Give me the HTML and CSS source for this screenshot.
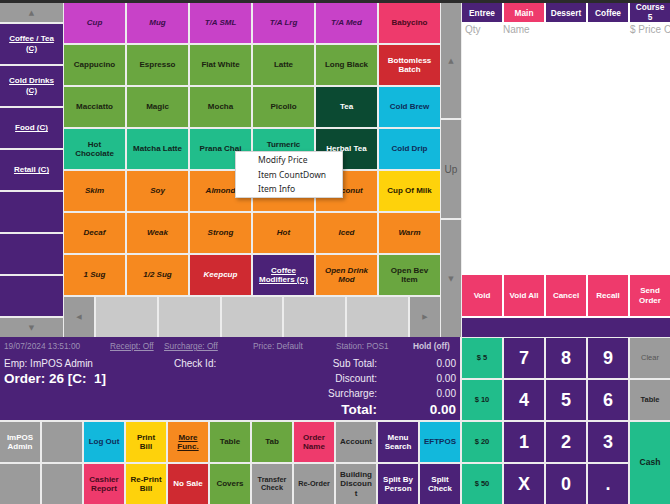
FILE: index.html
```html
<!DOCTYPE html>
<html lang="en">
<head>
<meta charset="UTF-8">
<title>POS</title>
<link rel="stylesheet" href="styles.css">
</head>
<body>
<div class="topbar"></div>
<div class="main">
	<div class="cats">
		<div class="arrow">&#9650;</div>
		<div class="cat u">Coffee / Tea (C)</div>
		<div class="cat u">Cold Drinks (C)</div>
		<div class="cat u">Food (C)</div>
		<div class="cat u">Retail (C)</div>
		<div class="cat"></div>
		<div class="cat"></div>
		<div class="cat"></div>
		<div class="arrow">&#9660;</div>
	</div>
	<div class="items">
		<div class="grid">
			<div class="btn mag it">Cup</div>
			<div class="btn mag it">Mug</div>
			<div class="btn mag it">T/A SML</div>
			<div class="btn mag it">T/A Lrg</div>
			<div class="btn mag it">T/A Med</div>
			<div class="btn pink">Babycino</div>

			<div class="btn green">Cappucino</div>
			<div class="btn green">Espresso</div>
			<div class="btn green">Flat White</div>
			<div class="btn green">Latte</div>
			<div class="btn green">Long Black</div>
			<div class="btn red">Bottomless Batch</div>

			<div class="btn green">Macciatto</div>
			<div class="btn green">Magic</div>
			<div class="btn green">Mocha</div>
			<div class="btn green">Picollo</div>
			<div class="btn dkgreen">Tea</div>
			<div class="btn cyan">Cold Brew</div>

			<div class="btn teal">Hot Chocolate</div>
			<div class="btn teal">Matcha Latte</div>
			<div class="btn teal">Prana Chai</div>
			<div class="btn teal">Turmeric Latte</div>
			<div class="btn dkgreen">Herbal Tea</div>
			<div class="btn cyan">Cold Drip</div>

			<div class="btn orange it">Skim</div>
			<div class="btn orange it">Soy</div>
			<div class="btn orange it">Almond</div>
			<div class="btn orange it">Oat</div>
			<div class="btn orange it">Coconut</div>
			<div class="btn yellow">Cup Of Milk</div>

			<div class="btn orange it">Decaf</div>
			<div class="btn orange it">Weak</div>
			<div class="btn orange it">Strong</div>
			<div class="btn orange it">Hot</div>
			<div class="btn orange it">Iced</div>
			<div class="btn orange it">Warm</div>

			<div class="btn orange it">1 Sug</div>
			<div class="btn orange it">1/2 Sug</div>
			<div class="btn red it">Keepcup</div>
			<div class="btn purple u">Coffee Modifiers (C)</div>
			<div class="btn orange it">Open Drink Mod</div>
			<div class="btn green">Open Bev Item</div>
		</div>
		<div class="pager">
			<div class="arrow side">&#9664;</div>
			<div class="blank"></div>
			<div class="blank"></div>
			<div class="blank"></div>
			<div class="blank"></div>
			<div class="blank"></div>
			<div class="arrow side">&#9654;</div>
		</div>
	</div>
	<div class="vscroll">
		<div class="arrow vs-up">&#9650;</div>
		<div class="vs-mid">Up</div>
		<div class="arrow vs-down">&#9660;</div>
	</div>
	<div class="order">
		<div class="tabs">
			<div class="tab">Entree</div>
			<div class="tab on">Main</div>
			<div class="tab">Dessert</div>
			<div class="tab">Coffee</div>
			<div class="tab two">Course 5</div>
		</div>
		<div class="list">
			<div class="head"><span>Qty</span><span>Name</span><span>$ Price C</span></div>
		</div>
		<div class="actions">
			<div class="btn pink w">Void</div>
			<div class="btn pink w">Void All</div>
			<div class="btn pink w">Cancel</div>
			<div class="btn pink w">Recall</div>
			<div class="btn pink w">Send Order</div>
		</div>
		<div class="band"></div>
	</div>
</div>
<div class="lower">
	<div class="left">
		<div class="info">
			<div class="status">
				<span>19/07/2024 13:51:00</span>
				<span class="u">Receipt: Off</span>
				<span class="u">Surcharge: Off</span>
				<span>Price: Default</span>
				<span>Station: POS1</span>
				<span class="hold">Hold (off)</span>
			</div>
			<div class="sums">
				<span class="emp">Emp: ImPOS Admin</span>
				<span class="emp">Check Id:</span>
				<span class="lbl">Sub Total:</span>
				<span class="val">0.00</span>

				<span class="ord">Order: 26 [C:&nbsp; 1]</span>
				<span></span>
				<span class="lbl">Discount:</span>
				<span class="val">0.00</span>

				<span></span>
				<span></span>
				<span class="lbl">Surcharge:</span>
				<span class="val">0.00</span>

				<span></span>
				<span></span>
				<span class="lbl total">Total:</span>
				<span class="val total">0.00</span>
			</div>
		</div>
		<div class="funcs">
			<div class="btn gray w">ImPOS Admin</div>
			<div class="btn gray"></div>
			<div class="btn cyan">Log Out</div>
			<div class="btn yellow pad">Print Bill</div>
			<div class="btn orange u">More Func.</div>
			<div class="btn green">Table</div>
			<div class="btn green">Tab</div>
			<div class="btn pink">Order Name</div>
			<div class="btn gray">Account</div>
			<div class="btn purple">Menu Search</div>
			<div class="btn cyan">EFTPOS</div>

			<div class="btn gray"></div>
			<div class="btn gray"></div>
			<div class="btn pink">Cashier Report</div>
			<div class="btn yellow">Re-Print Bill</div>
			<div class="btn red">No Sale</div>
			<div class="btn green">Covers</div>
			<div class="btn gray sm">Transfer Check</div>
			<div class="btn gray sm">Re-Order</div>
			<div class="btn gray brk">Building Discount</div>
			<div class="btn purple">Split By Person</div>
			<div class="btn purple">Split Check</div>
		</div>
	</div>
	<div class="numpad">
		<div class="btn teal cash">$ 5</div>
		<div class="btn key">7</div>
		<div class="btn key">8</div>
		<div class="btn key">9</div>
		<div class="btn gray clear">Clear</div>

		<div class="btn teal cash">$ 10</div>
		<div class="btn key">4</div>
		<div class="btn key">5</div>
		<div class="btn key">6</div>
		<div class="btn gray side-key">Table</div>

		<div class="btn teal cash">$ 20</div>
		<div class="btn key">1</div>
		<div class="btn key">2</div>
		<div class="btn key">3</div>
		<div class="btn teal pay">Cash</div>

		<div class="btn teal cash">$ 50</div>
		<div class="btn key">X</div>
		<div class="btn key">0</div>
		<div class="btn key">.</div>
	</div>
</div>

<div class="menu">
	<div>Modify Price</div>
	<div>Item CountDown</div>
	<div>Item Info</div>
</div>
</body>
</html>
```

FILE: styles.css
```css
html, body { margin:0; padding:0; }
body { width:670px; height:504px; overflow:hidden; position:relative; background:#ececec; font-family:"Liberation Sans", Arial, sans-serif; font-weight:bold; font-size:8px; }

.topbar { height:3px; background:#2b2b2b; }

.main { display:flex; gap:1px; height:334px; }

/* category column */
.cats { width:63px; display:flex; flex-direction:column; gap:2px; }
.cats .arrow { height:19px; }
.cat { flex:1; background:#4b2277; color:#fff; display:flex; align-items:center; justify-content:center; text-align:center; padding:0 4px; line-height:1.2; }

.arrow { background:#9b9b9b; color:#707070; display:flex; align-items:center; justify-content:center; font-family:"DejaVu Sans", sans-serif; font-size:7px; }

/* item grid */
.items { width:376px; display:flex; flex-direction:column; gap:2px; }
.grid { display:grid; grid-template-columns:repeat(6, 1fr); grid-template-rows:repeat(7, 40px); gap:2px; }
.grid .btn { padding:0 4px; }
.pager { height:40px; display:flex; gap:2px; }
.pager .side { width:30px; }
.pager .blank { flex:1; background:#c9c9c9; }

.vscroll { width:20px; display:flex; flex-direction:column; gap:2px; }
.vs-up { height:115px; }
.vs-mid { height:98px; background:#9b9b9b; color:#555; font-weight:normal; font-size:10px; display:flex; align-items:center; justify-content:center; }
.vs-down { flex:1; }

/* buttons */
.btn { display:flex; align-items:center; justify-content:center; text-align:center; line-height:1.15; padding:0 3px; overflow:hidden; }
.it { font-style:italic; }
.u { text-decoration:underline; }
.w { color:#fff !important; }

.mag { background:#c842c8; color:#3b0e4c; }
.pink { background:#ee3a6c; color:#4a0a1e; }
.green { background:#6aa640; color:#1b2410; }
.red { background:#cf2a31; color:#fff; }
.dkgreen { background:#0b4a32; color:#fff; }
.cyan { background:#12b8dc; color:#0f2c5a; }
.teal { background:#21bd8b; color:#10261e; }
.orange { background:#f6891f; color:#2a1606; }
.yellow { background:#fed20b; color:#2a2000; }
.purple { background:#4b2277; color:#fff; }
.gray { background:#9b9b9b; color:#222; }

/* order panel */
.order { width:208px; background:#fff; display:flex; flex-direction:column; }
.tabs { height:19px; display:flex; gap:2px; }
.tab { width:40px; padding:0 4px; box-sizing:border-box; background:#4b2277; color:#fff; display:flex; align-items:center; justify-content:center; text-align:center; font-size:8.3px; }
.tab.on { background:#ee3a6c; }
.tab.two { line-height:10px; align-items:flex-end; overflow:hidden; }
.list { flex:1; padding-top:2px; }
.head { display:grid; grid-template-columns:38px 127px auto; padding-left:3px; color:#aaa; font-weight:normal; font-size:10px; line-height:12px; white-space:nowrap; overflow:hidden; }
.actions { height:41px; display:flex; gap:2px; }
.actions .btn { width:40px; padding:0 2px; }
.band { height:19px; margin-top:2px; background:#4b2277; }

/* lower area */
.lower { display:flex; gap:2px; height:167px; }
.left { width:460px; display:flex; flex-direction:column; gap:2px; }
.info { height:83px; background:#4b2277; padding:3px 4px 0; box-sizing:border-box; }
.status { display:grid; grid-template-columns:106px 54px 89px 83px 77px auto; color:#9d90b5; font-weight:normal; font-size:8.3px; line-height:12px; white-space:nowrap; }
.status .hold { font-weight:bold; color:#cfc6de; }
.sums { display:grid; grid-template-columns:170px 1fr auto 79px; grid-template-rows:15px 15px 15px 17px; margin-top:4px; color:#eee8f5; font-weight:normal; font-size:10px; align-items:center; white-space:nowrap; }
.sums .lbl, .sums .val { text-align:right; }
.sums .ord { font-weight:bold; font-size:13.5px; color:#fff; }
.sums .total { font-weight:bold; font-size:13.5px; color:#fff; }

.funcs { display:grid; grid-template-columns:repeat(11, 40px); grid-template-rows:repeat(2, 40px); gap:2px; }
.funcs .btn { padding:0 2px; }
.funcs .pad { padding:0 5px; }
.funcs .sm { font-size:7.3px; }
.funcs .brk { overflow-wrap:anywhere; padding:0 4px; }

.numpad { width:208px; margin-top:1px; display:grid; grid-template-columns:repeat(5, 40px); grid-template-rows:repeat(4, 40px); gap:2px; }
.key { background:#4b2277; color:#fff; font-size:18px; }
.cash { font-size:7.5px; }
.clear { font-weight:normal; color:#555; font-size:7.5px; }
.side-key { font-size:7.5px; }
.pay { grid-row:span 2; font-size:8.5px; }

/* context menu */
.menu { position:absolute; left:235px; top:151px; width:106px; height:44px; padding-top:1px; background:#fff; border:1px solid #d4d4d4; box-shadow:2px 2px 4px rgba(0,0,0,.3); font-family:"Noto Sans", sans-serif; font-weight:normal; font-size:8.5px; color:#2a2a2a; }
.menu div { height:14.5px; line-height:14.5px; padding-left:22px; }
```
